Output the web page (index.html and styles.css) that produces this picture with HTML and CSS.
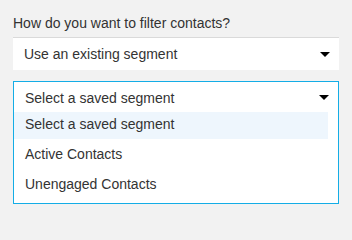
FILE: index.html
```html
<!DOCTYPE html>
<html>
<head>
<meta charset="utf-8">
<link rel="stylesheet" href="styles.css">
</head>
<body>
<div class="panel">
  <div class="label">How do you want to filter contacts?</div>
  <div class="select">
    <span class="value">Use an existing segment</span>
    <span class="caret"></span>
  </div>
  <div class="dropdown">
    <div class="dd-head">
      <span class="value">Select a saved segment</span>
      <span class="caret"></span>
    </div>
    <ul class="options">
      <li class="option active">Select a saved segment</li>
      <li class="option">Active Contacts</li>
      <li class="option">Unengaged Contacts</li>
    </ul>
  </div>
</div>
</body>
</html>
```

FILE: styles.css
```css
html, body {
  margin: 0;
  padding: 0;
  background: #f2f2f2;
}
body {
  font-family: "Liberation Sans", Arial, sans-serif;
  font-size: 14px;
  line-height: 16px;
  color: #333333;
}
.panel {
  padding: 15px 13px 0 13px;
  display: flex;
  flex-direction: column;
}
.label {
  height: 16px;
  margin-bottom: 6px;
}
.select {
  background: #ffffff;
  border-top: 1px solid #dadada;
  height: 32px;
  display: flex;
  align-items: center;
  justify-content: space-between;
  padding: 0 9px 0 11px;
  margin-bottom: 11px;
}
.caret {
  width: 0;
  height: 0;
  border-left: 5px solid transparent;
  border-right: 5px solid transparent;
  border-top: 5px solid #000000;
}
.select .caret {
  margin-top: 1px;
}
.dropdown {
  background: #ffffff;
  border: 1px solid #14ade6;
  height: 121px;
  display: flex;
  flex-direction: column;
}
.dd-head {
  display: flex;
  align-items: center;
  justify-content: space-between;
  padding: 8px 9px 6px 11px;
}
.dd-head .caret {
  margin-top: -2px;
}
.options {
  list-style: none;
  margin: 0 10px 0 0;
  padding: 0;
  display: flex;
  flex-direction: column;
  gap: 3px;
}
.option {
  padding: 4px 11px 7px 11px;
}
.option.active {
  background: #eef6fd;
}
```
